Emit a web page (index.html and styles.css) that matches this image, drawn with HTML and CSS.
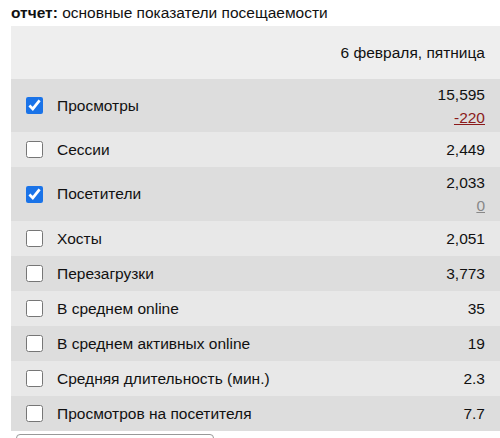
FILE: index.html
```html
<!DOCTYPE html>
<html lang="ru">
<head>
<meta charset="utf-8">
<link rel="stylesheet" href="styles.css">
</head>
<body>
<div class="page">
  <div class="title"><b>отчет:</b> основные показатели посещаемости</div>
  <div class="table">
    <div class="head">6 февраля, пятница</div>
    <div class="row dark tall">
      <label class="name"><input type="checkbox" checked><span>Просмотры</span></label>
      <div class="vals"><span>15,595</span><a class="neg">-220</a></div>
    </div>
    <div class="row light">
      <label class="name"><input type="checkbox"><span>Сессии</span></label>
      <div class="vals"><span>2,449</span></div>
    </div>
    <div class="row dark tall2">
      <label class="name"><input type="checkbox" checked><span>Посетители</span></label>
      <div class="vals"><span>2,033</span><a class="zero">0</a></div>
    </div>
    <div class="row light">
      <label class="name"><input type="checkbox"><span>Хосты</span></label>
      <div class="vals"><span>2,051</span></div>
    </div>
    <div class="row dark">
      <label class="name"><input type="checkbox"><span>Перезагрузки</span></label>
      <div class="vals"><span>3,773</span></div>
    </div>
    <div class="row light">
      <label class="name"><input type="checkbox"><span>В среднем online</span></label>
      <div class="vals"><span>35</span></div>
    </div>
    <div class="row dark">
      <label class="name"><input type="checkbox"><span>В среднем активных online</span></label>
      <div class="vals"><span>19</span></div>
    </div>
    <div class="row light">
      <label class="name"><input type="checkbox"><span>Средняя длительность (мин.)</span></label>
      <div class="vals"><span>2.3</span></div>
    </div>
    <div class="row dark">
      <label class="name"><input type="checkbox"><span>Просмотров на посетителя</span></label>
      <div class="vals"><span>7.7</span></div>
    </div>
  </div>
  <div class="bottom-box"></div>
</div>
</body>
</html>
```
FILE: styles.css
```css
html, body {
  margin: 0;
  padding: 0;
  background: #fff;
}
body {
  font-family: "Liberation Sans", Arial, sans-serif;
  font-size: 15.5px;
  color: #111;
}
.page {
  padding: 3px 0 0 11px;
}
.title {
  height: 23px;
  line-height: 20px;
}
.title b {
  font-weight: bold;
}
.table {
  display: flex;
  flex-direction: column;
}
.head {
  height: 53px;
  background: #eeeeee;
  display: flex;
  align-items: center;
  justify-content: flex-end;
  padding-right: 15px;
}
.row {
  height: 35px;
  display: flex;
  align-items: center;
  justify-content: space-between;
  padding: 0 15px;
}
.row.tall { height: 53px; }
.row.tall2 { height: 54px; }
.dark { background: #dddddd; }
.light { background: #e8e8e8; }
.name {
  display: flex;
  align-items: center;
  gap: 14px;
}
.name input {
  width: 17px;
  height: 17px;
  margin: 0;
  accent-color: #1a73e8;
}
.vals {
  display: flex;
  flex-direction: column;
  align-items: flex-end;
  line-height: 23px;
}
.neg {
  color: #8b1a1a;
  text-decoration: underline;
}
.zero {
  color: #888;
  text-decoration: underline;
}
.bottom-box {
  margin: 3px 0 0 5px;
  width: 196px;
  height: 20px;
  border: 1px solid #999;
  border-radius: 4px;
}
```
